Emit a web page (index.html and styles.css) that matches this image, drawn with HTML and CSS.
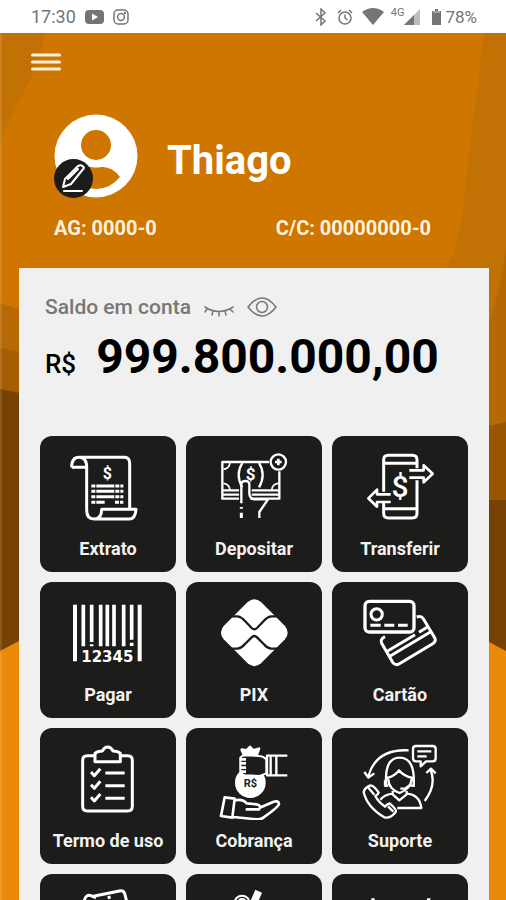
FILE: index.html
```html
<!DOCTYPE html>
<html lang="pt-BR">
<head>
  <meta charset="UTF-8" />
  <meta name="viewport" content="width=device-width, initial-scale=1.0"/>
  <title>Minha Conta</title>
  <link rel="stylesheet" href="styles.css">
</head>
<body>

  <div class="status-bar">
    <span class="time">17:30</span>
    <svg width="19" height="14" viewBox="0 0 19 14"><rect width="19" height="14" rx="4" fill="#757575"/><path d="M7 3.5l6 3.5-6 3.5z" fill="#fff"/></svg>
    <svg class="insta" width="16" height="16" viewBox="0 0 16 16" fill="none" stroke="#757575" stroke-width="1.5"><rect x="1" y="1" width="14" height="14" rx="4"/><circle cx="8" cy="8" r="3.4"/><circle cx="12" cy="4" r=".5"/></svg>
    <div class="status-right">
      <svg width="12" height="18" viewBox="0 0 12 18" fill="none" stroke="#757575" stroke-width="1.5"><path d="M1 5l9 8-4 4V1l4 4-9 8"/></svg>
      <svg class="alarm" width="16" height="16" viewBox="0 0 16 16" fill="none" stroke="#757575" stroke-width="1.5"><circle cx="8" cy="9" r="6"/><path d="M8 5.500V9l2.500 2M1 4l3-3M15 4l-3-3"/></svg>
      <svg class="wifi" width="22" height="17" viewBox="0 0 22 17"><path d="M0 4Q11-4 22 4L11 17z" fill="#757575"/></svg>
      <span class="network">4G</span>
      <svg class="signal" width="16" height="16" viewBox="0 0 16 16"><path d="M0 16L16 0v16z" fill="#bdbdbd"/><path d="M0 16L10 6v10z" fill="#757575"/></svg>
      <svg class="battery" width="9" height="16" viewBox="0 0 9 16"><path d="M3 0h3v2h3v14H0V2h3z" fill="#757575"/><path d="M1 2h7v2H1z" fill="#a5a5a5"/></svg>
      <span class="charge">78%</span>
    </div>
  </div>

  <main class="app">
    <!-- layered shapes behind everything -->
    <svg class="backdrop" viewBox="0 0 506 867" preserveAspectRatio="none">
      <rect width="506" height="867" fill="#cf7600"/>
      <path d="M0 0h45q-4 24-14 46Q8 85 0 112z" fill="#c27105"/>
      <path d="M484 0h22v867h-60V235q16-25 20-90z" fill="#c27105"/>
      <path d="M0 270l30 10v50H0z" fill="#b76905"/>
      <path d="M0 315l30 6v50H0z" fill="#a65d04"/>
      <path d="M0 356l30 6v300H0z" fill="#754203"/>
      <path d="M506 215q-6 50-20 80v100h20z" fill="#b66804"/>
      <path d="M480 395l26-6v90h-26z" fill="#985603"/>
      <path d="M480 467h26v200h-26z" fill="#754203"/>
      <path d="M0 618Q253 480 506 618v249H0z" fill="#eb8a0a"/>
      <path d="M0 0h2v867H0z" fill="#fff" opacity=".12"/>
    </svg>

    <header class="header">
      <button class="menu" type="button" aria-label="Menu">
        <svg width="30" height="18" viewBox="0 0 30 18" stroke="#fff2dd" stroke-width="3" stroke-linecap="round"><path d="M1.500 2h27M1.500 9h27M1.500 16h27"/></svg>
      </button>

      <div class="profile">
        <div class="avatar">
          <svg width="84" height="84" viewBox="0 0 84 84">
            <circle cx="42" cy="42" r="41.500" fill="#fff"/>
            <circle cx="42" cy="31" r="15" fill="#cf7600"/>
            <path d="M17 63q10-12 20-10 5 1 10 0 11-1 19 10-10 12-24 12-15 0-25-12z" fill="#cf7600"/>
          </svg>
          <button class="edit" type="button" aria-label="Editar foto">
            <svg width="39" height="39" viewBox="0 0 39 39" fill="none" stroke="#fff" stroke-width="2" stroke-linecap="round" stroke-linejoin="round"><path d="M9 28l2-8L24 7q4-2 6 2L17 25zM14 20l10-10M10 32h18"/></svg>
          </button>
        </div>
        <h1 class="name">Thiago</h1>
      </div>

      <div class="account">
        <span>AG: 0000-0</span>
        <span>C/C: 00000000-0</span>
      </div>
    </header>

    <section class="panel">
      <div class="balance">
        <div class="balance-label">
          <span>Saldo em conta</span>
          <button class="eye" type="button" aria-label="Ocultar saldo">
            <svg width="30" height="20" viewBox="0 0 30 20" fill="none" stroke="#777" stroke-width="1.500" stroke-linecap="round"><path d="M1 10q14 9 28 0M3 12l-2 3M9 14l-1 4M15 15v4M21 14l1 4M26 12l3 3"/></svg>
          </button>
          <button class="eye" type="button" aria-label="Mostrar saldo">
            <svg width="30" height="20" viewBox="0 0 30 20" fill="none" stroke="#777" stroke-width="1.500"><path d="M1 10Q15-8 29 10 15 28 1 10z"/><circle cx="15" cy="10" r="5.500"/></svg>
          </button>
        </div>
        <div class="balance-value"><span class="currency">R$</span><strong>999.800.000,00</strong></div>
      </div>

      <nav class="tiles">
        <button class="tile" type="button">
          <svg class="icon" viewBox="99 54 240 240" stroke-width="9">
            <path d="M130 82h140q14 2 14 18v135M110 112h44M110 112q0-30 22-30 23 0 23 30v128q0 27 22 27h106q18 0 20-29H200q0 29-22 29"/>
            <path d="M169 168h96M169 184h96M169 200h96M169 217h40M240 217h25" stroke-dasharray="12 3 54 3"/>
            <text x="217" y="146" font-size="48">$</text>
          </svg>
          <span>Extrato</span>
        </button>
        <button class="tile" type="button">
          <svg class="icon" viewBox="99 54 240 240" stroke-width="7">
            <path d="M264 96H124v110h50M208 206h87v-82M124 181h50M212 181h83M124 194h50M212 194h83"/>
            <path d="M127 118q18-2 20-20M127 160q18 2 20 20M292 160q-18 2-20 20" stroke-width="5"/>
            <path d="M184 99q-22 35 0 73M234 99q22 35 0 73M181 220v-57q0-10 12-10t12 10v28q1 15 14 17h42l-26 38v18"/>
            <path d="M181 231v5M181 248v16" stroke-width="9"/>
            <circle cx="292" cy="96" r="23"/>
            <path d="M292 86v20M282 96h20" stroke-width="8"/>
            <text x="209" y="150" font-size="51">$</text>
          </svg>
          <span>Depositar</span>
        </button>
        <button class="tile" type="button">
          <svg class="icon" viewBox="99 54 240 240" stroke-width="9">
            <path d="M170 185V90q0-14 14-14h72q14 0 14 14v25M270 151v99q0 14-14 14h-72q-14 0-14-14v-31M172 100h96M172 236h96"/>
            <path d="M247 121h43v-15l27 25-27 26v-14h-43M191 193h-41v-14l-26 26 26 25v-14h41" stroke-width="8"/>
            <text class="light" x="219" y="200" font-size="90">$</text>
          </svg>
          <span>Transferir</span>
        </button>
        <button class="tile" type="button">
          <svg class="icon" viewBox="99 54 240 240">
            <path d="M120 86v170M314 86v170" stroke-width="12"/>
            <path d="M145 86v125M170 86v112M170 205v6M197 86v125M217 86v125M237 86v125M266 86v125M290 86v105M290 200v10" stroke-width="11"/>
            <text class="barcode" x="217" y="257" font-size="45">12345</text>
          </svg>
          <span>Pagar</span>
        </button>
        <button class="tile" type="button">
          <svg class="icon" viewBox="99 54 240 240">
            <path d="M200 78q20-17 40 0l72 72q16 20 0 40l-72 72q-20 17-40 0l-72-72q-16-20 0-40z" fill="#fff" stroke="none"/>
            <path d="M150 121h20q12 2 22 14l20 21q8 8 16 0l20-21q10-12 22-14h20M150 218h20q12-2 22-14l20-20q8-8 16 0l20 20q10 12 22 14h20" stroke="#1c1c1a" stroke-width="7"/>
          </svg>
          <span>PIX</span>
        </button>
        <button class="tile" type="button">
          <svg class="icon" viewBox="99 54 240 240" stroke-width="9">
            <rect x="114" y="76" width="147" height="92" rx="13" stroke-width="10"/>
            <circle cx="149" cy="115" r="17"/>
            <path d="M130 148h31M172 148h30M213 148h29"/>
            <path d="M269 123q14-5 20 5l34 57q6 10-6 18l-100 60q-12 7-20-4l-33-57q-6-12 10-20M182 225l82-49M276 169l29-18M191 239l124-74"/>
          </svg>
          <span>Cartão</span>
        </button>
        <button class="tile" type="button">
          <svg class="icon" viewBox="99 54 240 240" stroke-width="9">
            <path d="M178 101h-21q-14 0-14 14v138q0 14 14 14h121q14 0 14-14V115q0-14-14-14h-21M180 119V94q8-7 22-7 6-12 16-12t16 12q14 0 22 7v25z"/>
            <path d="M168 150l10 11 18-21M168 188l10 11 18-21M168 226l10 11 18-21M211 153h58M211 191h58M211 229h58"/>
          </svg>
          <span>Termo de uso</span>
        </button>
        <button class="tile" type="button">
          <svg class="icon" viewBox="99 54 240 240" stroke-width="8">
            <circle cx="208" cy="182" r="46" fill="#fff" stroke="none"/>
            <path d="M190 101l-8-18 15 2 10-10 10 10 17-5-8 22z" fill="#fff"/>
            <path d="M178 107q5-7 14-7l42 2q12 0 22 10v42q-10 4-20 8l-43-2q-13-2-15-14z" fill="#1c1c1a" stroke-width="6"/>
            <path d="M176 112h19M176 124h19M176 137h19M176 149h19" stroke-width="8"/>
            <path d="M319 101h-61v59h61M286 101v59M269 103v55" stroke-width="7"/>
            <path d="M131 226l30 4-7 57-34-5zM161 235q25-5 36 9l30 3q16 3 7 15h-40M236 257l42-18q15-4 16 7-2 9-46 40-9 7-20 6l-71-7"/>
            <text class="money" x="208" y="194" font-size="33">R$</text>
          </svg>
          <span>Cobrança</span>
        </button>
        <button class="tile" type="button">
          <svg class="icon" viewBox="99 54 240 240" stroke-width="7">
            <path d="M245 85q-98-5-121 78M112 150l12 17 18-13M293 237q36-47 18-93M298 153l14-13 14 14"/>
            <path d="M267 72h50q9 0 9 9v28q0 9-9 9h-20l-16 15v-15h-14q-9 0-9-9V81q0-9 9-9zM271 88h42M271 103h28"/>
            <path d="M178 195q-8-88 40-88t42 88M179 168q24-5 37-23 14 18 41 23M184 171q0 30 34 42 33-12 36-42M174 175v16h10M260 175v16h-14l-12 9h-14M197 207v10l20 18 22-18v-10M198 215q-25 2-38 18M238 215q40 2 45 43h-72"/>
            <path d="M130 190q-18 8-20 20 10 45 62 76 18 5 34-16 5-6-18-26-10 3-14 10-20-14-29-32 8-4 10-10-14-22-25-22zM123 196l19 22M183 253l16 16"/>
          </svg>
          <span>Suporte</span>
        </button>
        <button class="tile" type="button" aria-label="Cartões">
          <svg class="icon" viewBox="99 54 240 240" stroke-width="9">
            <path d="M148 98q4-20 20-15l15 7M175 85l82-17q9-1 12 9l8 30M218 89l9-2"/>
          </svg>
        </button>
        <button class="tile" type="button" aria-label="Serviços">
          <svg class="icon" viewBox="99 54 240 240" stroke-width="6">
            <circle cx="183" cy="105" r="22"/><circle cx="183" cy="105" r="12"/>
            <path d="M233 70l-14 32" stroke-width="22"/>
          </svg>
        </button>
        <button class="tile" type="button" aria-label="Mais opções">
          <svg class="icon" viewBox="99 54 240 240" stroke-width="10">
            <path d="M138 91v16M305 91v16"/>
          </svg>
        </button>
      </nav>
    </section>
  </main>

</body>
</html>
```

FILE: styles.css
```css
* {
  box-sizing: border-box;
}
body {
  margin: 0;
  height: 100vh;
  display: flex;
  flex-direction: column;
  overflow: hidden;
  font-family: Roboto, "Liberation Sans", sans-serif;
  background: #cf7600;
}
button {
  font: inherit;
  padding: 0;
  border: 0;
  background: none;
  cursor: pointer;
}
svg {
  display: block;
}

.status-bar {
  flex: none;
  display: flex;
  align-items: center;
  height: 33px;
  padding: 0 29px 0 31px;
  background: #fff;
  color: #757575;
}
.time {
  font-size: 18px;
  margin-right: 9px;
}
.insta {
  margin-left: 9px;
}
.status-right {
  display: flex;
  align-items: center;
  margin-left: auto;
}
.alarm {
  margin-left: 10px;
}
.wifi {
  margin: 0 7px 0 9px;
}
.network {
  font-size: 11px;
  margin-bottom: 9px;
}
.battery {
  margin: 0 4px 0 12px;
}
.charge {
  font-size: 17px;
}

.app {
  position: relative;
  flex: 1;
  min-height: 0;
  overflow: hidden;
}
.backdrop {
  position: absolute;
  inset: 0;
  width: 100%;
  height: 100%;
}

.header {
  position: relative;
  padding: 20px 75px 28px 54px;
  color: #fff;
}
.menu {
  display: block;
  margin: 0 0 43px -23px;
}
.profile {
  display: flex;
  align-items: center;
  gap: 29px;
}
.avatar {
  position: relative;
}
.edit {
  position: absolute;
  left: 0;
  bottom: 0;
  border-radius: 50%;
  background: #1c1c1a;
}
.name {
  margin: 0;
  padding-top: 10px;
  font-size: 40px;
  line-height: 48px;
}
.account {
  display: flex;
  justify-content: space-between;
  margin-top: 18px;
  font-size: 20px;
  font-weight: bold;
  line-height: 24px;
  color: #fff2dd;
}

.panel {
  position: relative;
  margin: 0 17px 0 19px;
  padding: 27px 21px;
  background: #f0f0f0;
}
.balance {
  padding-left: 5px;
}
.balance-label {
  display: flex;
  align-items: center;
  gap: 13px;
  font-size: 21px;
  font-weight: 500;
  line-height: 24px;
  color: #777;
}
.balance-value {
  display: flex;
  align-items: baseline;
  gap: 20px;
  margin: 10px 0 44px;
  font-size: 48px;
  line-height: 56px;
  color: #000;
}
.currency {
  font-size: 26px;
  font-weight: 500;
}

.tiles {
  display: grid;
  grid-template-columns: repeat(3, 1fr);
  gap: 10px;
}
.tile {
  display: flex;
  flex-direction: column;
  align-items: center;
  gap: 9px;
  aspect-ratio: 1;
  padding-top: 12px;
  border-radius: 12px;
  background: #1c1c1a;
  color: #f2f2f2;
  font-size: 18px;
  font-weight: bold;
  line-height: 24px;
}
.icon {
  width: 80px;
  height: 80px;
  fill: none;
  stroke: #fff;
  stroke-linejoin: round;
}
.icon text {
  fill: #fff;
  stroke: none;
  text-anchor: middle;
}
.icon .light {
  font-weight: 500;
}
.icon .barcode {
  font-family: "DejaVu Sans", sans-serif;
}
.icon .money {
  fill: #1c1c1a;
}
```
